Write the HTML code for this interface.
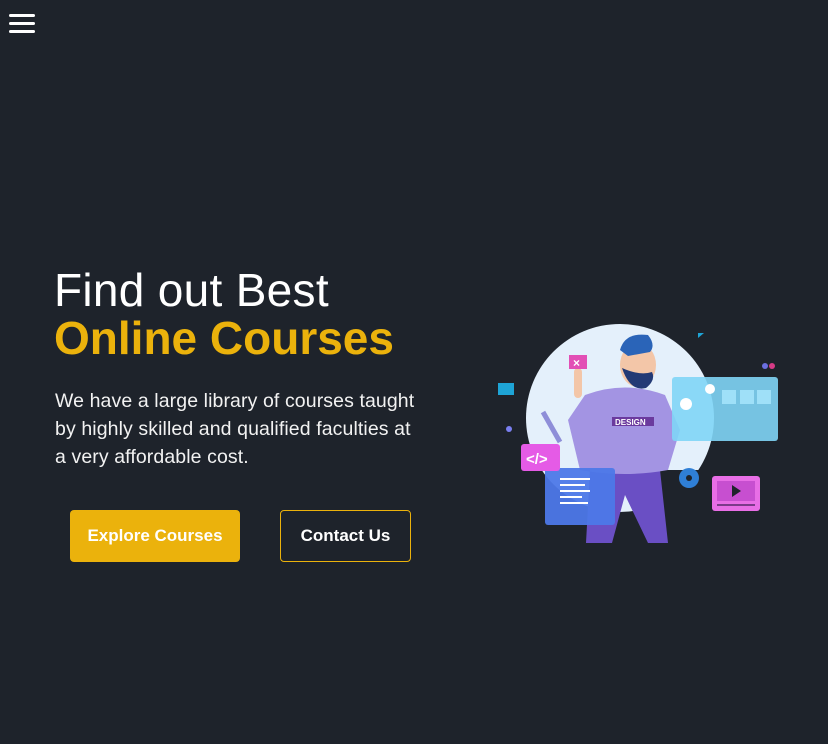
<!DOCTYPE html>
<html><head><meta charset="utf-8"><style>
html,body{margin:0;padding:0;width:828px;height:744px;background:#1e232b;overflow:hidden;font-family:"Liberation Sans",sans-serif;color:#fff}
.burger{position:absolute;left:9px;top:14px;width:26px}
.burger div{height:3px;background:#fff;border-radius:2px;margin-bottom:5px}
h1{position:absolute;left:54px;top:266px;margin:0;font-size:46px;line-height:48px;font-weight:normal;letter-spacing:0.3px}
h1 b{color:#ebb20c;font-weight:bold;letter-spacing:0}
p{position:absolute;left:55px;top:387px;margin:0;font-size:19.5px;line-height:28px;color:#f2f2f2;width:420px;letter-spacing:0.1px}
.btn{position:absolute;top:510px;height:52px;border-radius:4px;font-weight:bold;font-size:17px;display:flex;align-items:center;justify-content:center;box-sizing:border-box}
.b1{left:70px;width:170px;background:#ebb20c;color:#fff}
.b2{left:280px;width:131px;border:1px solid #ebb20c;color:#fff}
svg{position:absolute;left:0;top:0}
</style></head><body>
<div class="burger"><div></div><div></div><div></div></div>
<h1>Find out Best<br><b>Online Courses</b></h1>
<p>We have a large library of courses taught<br>by highly skilled and qualified faculties at<br>a very affordable cost.</p>
<div class="btn b1">Explore Courses</div>
<div class="btn b2">Contact Us</div>
<svg width="828" height="744">
<circle cx="620" cy="418" r="94" fill="#e4f0fb"/>
<rect x="650" y="470" width="80" height="80" fill="#1e232b"/>
<rect x="498" y="383" width="16" height="12" fill="#1ea4d6"/>
<circle cx="765" cy="366" r="3" fill="#6b6fe0"/><circle cx="772" cy="366" r="3" fill="#d63b86"/>
<circle cx="509" cy="429" r="3" fill="#7a7ff0"/>
<path d="M698 333 l6 0 l-6 5z" fill="#1ea4d6"/>
<path d="M590 470 L660 470 L668 543 L648 543 L625 495 L612 543 L586 543 Z" fill="#6a4fc4"/>
<path d="M585 395 Q625 380 665 395 L680 430 L668 470 Q625 478 580 470 L568 420 Z" fill="#a394e3"/>
<rect x="612" y="417" width="42" height="9" fill="#6b3a9e"/>
<text x="615" y="425" font-size="8" font-weight="bold" fill="#fff" font-family="Liberation Sans">DESIGN</text>
<ellipse cx="638" cy="365" rx="18" ry="22" fill="#f3c6a8"/>
<path d="M620 350 Q625 332 648 335 Q656 345 650 352 L628 356 Z" fill="#2a64b8"/>
<path d="M622 368 Q630 392 646 388 Q656 380 652 372 Q640 376 622 368Z" fill="#233a75"/>
<rect x="574" y="368" width="8" height="30" rx="4" fill="#f3c6a8"/>
<rect x="569" y="355" width="18" height="14" fill="#e24fb5"/>
<text x="573" y="367" font-size="12" font-weight="bold" fill="#fff">×</text>
<rect x="672" y="377" width="106" height="64" rx="3" fill="#80d5f6" opacity="0.9"/>
<rect x="722" y="390" width="14" height="14" fill="#9fe0f8"/><rect x="740" y="390" width="14" height="14" fill="#9fe0f8"/><rect x="757" y="390" width="14" height="14" fill="#9fe0f8"/>
<circle cx="686" cy="404" r="6" fill="#fff"/><circle cx="710" cy="389" r="5" fill="#fff"/>
<rect x="545" y="468" width="70" height="57" rx="3" fill="#4d78e8" opacity="0.95"/>
<g fill="#fff"><rect x="560" y="478" width="30" height="2"/><rect x="560" y="484" width="25" height="2"/><rect x="560" y="490" width="30" height="2"/><rect x="560" y="496" width="22" height="2"/><rect x="560" y="502" width="28" height="2"/></g>
<rect x="521" y="444" width="39" height="27" rx="3" fill="#e55be6"/>
<text x="526" y="464" font-size="15" font-weight="bold" fill="#fff">&lt;/&gt;</text>
<circle cx="689" cy="478" r="10" fill="#2f7fd6"/><circle cx="689" cy="478" r="3" fill="#1e232b"/>
<rect x="712" y="476" width="48" height="35" rx="3" fill="#e86ee6"/>
<rect x="717" y="481" width="38" height="20" fill="#c74fd0"/>
<path d="M732 485 l9 6 l-9 6z" fill="#1e232b"/>
<rect x="717" y="504" width="38" height="2" fill="#7b3b8a"/>
<path d="M543 412 L560 442" stroke="#8e8ed8" stroke-width="5"/>
</svg>
</body></html>
